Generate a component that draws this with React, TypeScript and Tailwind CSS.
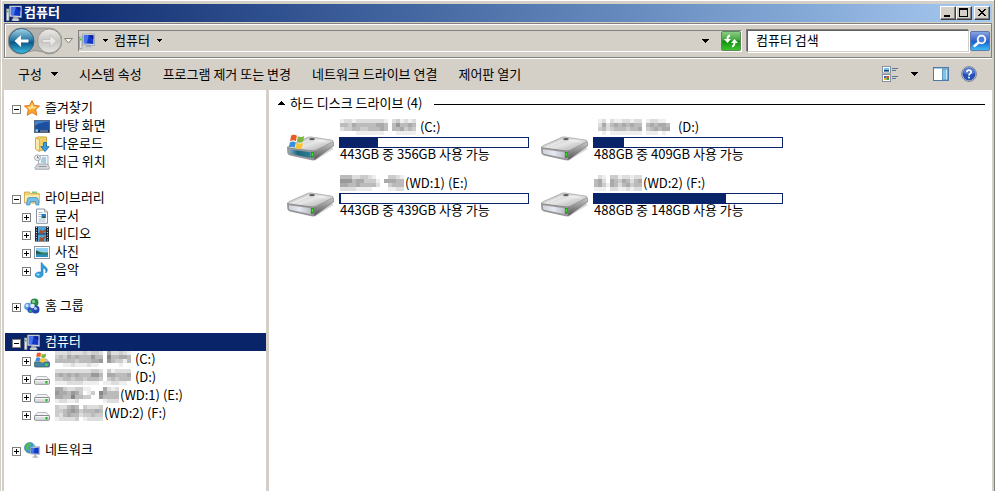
import React, { useState } from 'react';

type IconProps = { className?: string };

/* ---------- small icons (16x16 grid) ---------- */

function ComputerIcon({ className = 'size-4' }: IconProps) {
  return (
    <svg viewBox="0 0 16 16" className={className} aria-hidden="true">
      <rect x="0.5" y="4" width="2.5" height="11.5" fill="#e4e6ea" stroke="#8b9098" strokeWidth="0.7" />
      <rect x="1" y="5.5" width="1.5" height="2" fill="#3fc22f" />
      <path d="M7.5 12h4l1.5 3H6z" fill="#aab0ba" />
      <ellipse cx="9.5" cy="15" rx="4" ry="1" fill="#c9cdd4" />
      <path d="M3.5 1h12v11.5l-12-1z" fill="#dfe3ea" stroke="#8d95a5" strokeWidth="0.7" />
      <path d="M4.8 2.2h9.6v8.9l-9.6-.8z" fill="#1237c8" />
      <path d="M4.8 2.2h5l-2 8.3-3-.2z" fill="#4a74e8" />
      <path d="M9 2.2h5.4v4z" fill="#0a1f96" />
    </svg>
  );
}

function StarIcon() {
  return (
    <svg viewBox="0 0 16 16" className="size-4" aria-hidden="true">
      <path d="M8 .5l2.3 4.9 5.3.6-3.9 3.6 1.2 5.7L8 12.5l-4.900 2.800 1.200-5.700L.4 6l5.300-.6z" fill="#f9a42c" stroke="#d9731a" strokeWidth="0.9" strokeLinejoin="round" />
      <path d="M8 3l1.4 3.5 3.4.4-2.6 2.2L8 8.6 5.6 9.8 3.2 7l3.3-.4z" fill="#ffe08a" />
    </svg>
  );
}

function DesktopIcon() {
  return (
    <svg viewBox="0 0 16 16" className="size-4" aria-hidden="true">
      <rect x="0.5" y="2.5" width="15" height="12" fill="#1c4f9d" stroke="#5a6880" />
      <path d="M1 11C5 6 10 4 15 3.5V3H1z" fill="#3b7fd0" />
      <path d="M1 8c4-3 8-4 14-4v2C9 6 5 8 1 11z" fill="#1f4f9a" />
      <rect x="1" y="12" width="14" height="2" fill="#16264b" />
      <circle cx="2.8" cy="12.6" r="1.6" fill="#63c7e8" />
      <rect x="6" y="12.5" width="8" height="1" fill="#9fb9de" />
    </svg>
  );
}

function DownloadIcon() {
  return (
    <svg viewBox="0 0 16 16" className="size-4" aria-hidden="true">
      <path d="M1.5 2l3-1.2L12.5 1v12.5l-8 1.5-3-2z" fill="#f0cf68" stroke="#c79b34" strokeWidth="0.8" />
      <path d="M1.5 2l4 1.5v12L1.5 13z" fill="#fae9a8" stroke="#c79b34" strokeWidth="0.6" />
      <path d="M9.5 6.5h3v4.2h2.7L11 15.6l-4.2-4.9h2.7z" fill="#35a0e4" stroke="#1666a8" strokeWidth="0.8" />
    </svg>
  );
}

function RecentIcon() {
  return (
    <svg viewBox="0 0 16 16" className="size-4" aria-hidden="true">
      <path d="M5.5 1.5h8.5v10H4z" fill="#f4f7fa" stroke="#9aa1ab" strokeWidth="0.8" />
      <path d="M8 4h4M7 6h5M7 8h5" stroke="#5ba3d4" />
      <path d="M11 5v5" stroke="#9cc7e4" />
      <path d="M3.5 10h10l2 3.5-.5 1.8H1.5L1 13.5z" fill="#d4d7db" stroke="#8a8f96" strokeWidth="0.7" />
      <path d="M4.5 12.5h8" stroke="#9298a0" />
      <circle cx="3.5" cy="3.7" r="2.9" fill="#edf0f3" stroke="#8f959d" strokeWidth="0.8" />
      <path d="M3.5 2v1.9h1.6" fill="none" stroke="#59616c" strokeWidth="0.8" />
    </svg>
  );
}

function LibraryIcon() {
  return (
    <svg viewBox="0 0 16 16" className="size-4" aria-hidden="true">
      <path d="M.5 2h5l1 1.5h8.8V13H.5z" fill="#f1d272" stroke="#cba241" strokeWidth="0.8" />
      <path d="M1 5.2h14V12H1z" fill="#fbeeb2" />
      <path d="M8 2.2h5" stroke="#5bb968" strokeWidth="1.2" />
      <path d="M2.5 15l.8-5.5Q3.5 7.5 5.5 7.5H12q2 0 2.200 2l.8 5.500h-3l-.6-3.500H6.600L5.800 15z" fill="#72bfea" stroke="#3887bd" strokeWidth="0.7" />
    </svg>
  );
}

function DocumentIcon() {
  return (
    <svg viewBox="0 0 16 16" className="size-4" aria-hidden="true">
      <path d="M2.5 1h8l3 3v11.300h-11z" fill="#fff" stroke="#7f8894" strokeWidth="0.9" />
      <path d="M10.5 1v3h3" fill="#dde3ea" stroke="#7f8894" strokeWidth="0.7" />
      <path d="M4.5 4.5h4M4.5 6.500h3M4.500 8.500h3M4.500 11h7M4.500 13h7" stroke="#9db2cd" strokeWidth="0.9" />
      <rect x="7.5" y="6" width="4.5" height="4" fill="#2c7cc4" />
      <path d="M7.5 10l2-2 2.500 2z" fill="#2b5d33" />
    </svg>
  );
}

function VideoIcon() {
  return (
    <svg viewBox="0 0 16 16" className="size-4" aria-hidden="true">
      <rect x="1" y="0.5" width="14" height="15" fill="#1d2733" />
      <rect x="4" y="1" width="8" height="6.5" fill="#4ba3e2" />
      <rect x="4" y="8.5" width="8" height="6.5" fill="#4ba3e2" />
      <path d="M5 7.500l1-4 2.500 1.500L12 3v2L9 7.500zM5 15l1-4 2 1 3-2 1 1-2 2v2z" fill="#a8502c" />
      <path d="M2.500 1v14M13.500 1v14" stroke="#cfd6dc" strokeWidth="1.1" strokeDasharray="1.1 1.4" />
    </svg>
  );
}

function PictureIcon() {
  return (
    <svg viewBox="0 0 16 16" className="size-4" aria-hidden="true">
      <rect x="0.5" y="2.5" width="15" height="12" fill="#fff" stroke="#8b949e" />
      <rect x="2" y="4" width="12" height="9" fill="#8fd0f2" />
      <path d="M2 7c3 0 5 2 12 1.500V11H2z" fill="#2f7d68" />
      <path d="M2 10.500h12V13H2z" fill="#2a8fbf" />
      <path d="M2 6.500c2 0 3 2 5 3H2z" fill="#1d5247" />
    </svg>
  );
}

function MusicIcon() {
  return (
    <svg viewBox="0 0 16 16" className="size-4" aria-hidden="true">
      <path d="M8 .8c.5 3 5.500 4 5.300 7.200-.1 1.300-.8 2.300-1.600 3 .8-3-.7-4.500-2.700-5v6.500c0 1.800-1.900 3-4.200 3-2 0-3.600-.9-3.600-2.500 0-1.800 2-3 4.100-3 .9 0 1.600.2 1.900.4V.8z" fill="#2ea1e3" stroke="#1669aa" strokeWidth="0.6" />
      <ellipse cx="4" cy="12.5" rx="1.6" ry="1" fill="#a9dcf8" />
    </svg>
  );
}

function HomegroupIcon() {
  return (
    <svg viewBox="0 0 16 16" className="size-4" aria-hidden="true">
      <circle cx="10.5" cy="4.5" r="4" fill="#2b8a4c" />
      <circle cx="4" cy="8.5" r="3.8" fill="#5c9be0" />
      <circle cx="11.5" cy="11.5" r="4" fill="#2446b4" />
      <circle cx="6.5" cy="12" r="3" fill="#2d52bd" />
      <circle cx="9.5" cy="3.5" r="1.5" fill="#92d69b" />
      <circle cx="3" cy="7.5" r="1.5" fill="#cfe6fa" />
      <circle cx="8.5" cy="8" r="2.3" fill="#dfeaf8" />
      <circle cx="11.5" cy="10.5" r="1.6" fill="#a9c6f2" />
      <circle cx="6.5" cy="13" r="1.3" fill="#3aa65b" />
    </svg>
  );
}

function NetworkIcon() {
  return (
    <svg viewBox="0 0 16 16" className="size-4" aria-hidden="true">
      <circle cx="5.8" cy="5.8" r="5.3" fill="#3d9bdc" stroke="#2367a5" strokeWidth="0.6" />
      <path d="M2 3c2-2.500 4-2.200 5-1.500L6 4 4 5l1 2-2 2C1.500 7.500 1 5 2 3z" fill="#55bd4c" />
      <path d="M9 1.800c1.500 1 2 2.500 2 3.700L9 5z" fill="#7cd06c" />
      <path d="M6.500 5.500l9-1v8l-9-.5z" fill="#dfe4ed" stroke="#8a94a8" strokeWidth="0.6" />
      <path d="M7.200 6.200l7.600-.8v6.300l-7.600-.5z" fill="#1238c4" />
      <path d="M7.200 6.200l3.500-.3-1.200 5.300-2.300-.1z" fill="#4a76e8" />
      <path d="M10.300 12.400h2v2h1.700v1.300H8.600v-1.300h1.700z" fill="#a7aeba" />
    </svg>
  );
}

function DriveIcon() {
  return (
    <svg viewBox="0 0 16 16" className="size-4" aria-hidden="true">
      <path d="M3.500 6.500h9l3 3.500H.5z" fill="#f2f3f4" stroke="#9b9fa4" strokeWidth="0.7" />
      <rect x="0.5" y="9.5" width="15" height="4.8" rx="1" fill="#dcdee1" stroke="#76797e" strokeWidth="0.8" />
      <path d="M1.500 10.500h13" stroke="#fff" strokeWidth="0.8" />
      <rect x="11.5" y="11" width="2" height="2.5" fill="#22b322" />
    </svg>
  );
}

function WindowsFlag() {
  return (
    <g>
      <path d="M2 1.500C4 .3 6 .5 7.500 1.600L6.600 6.800C5 5.700 3 5.600 1 6.800z" fill="#ea5a24" />
      <path d="M8.500 2.200c2 1 4 .9 6-.2l-1 5.200c-2 1.100-4 1.100-6 0z" fill="#79b83b" />
      <path d="M.8 8C2.800 6.800 4.800 6.900 6.300 8l-.9 5c-1.500-1-3.500-1.100-5.500 0z" fill="#3a8fdc" />
      <path d="M7.300 8.500c2 1 4 1 6 0l-1 5c-2 1.100-4 1.100-6 0z" fill="#fbc62d" />
    </g>
  );
}

function SystemDriveIcon() {
  return (
    <svg viewBox="0 0 16 16" className="size-4" aria-hidden="true">
      <path d="M3.500 7h9l3 3.500H.5z" fill="#c3ccd2" stroke="#8b949a" strokeWidth="0.6" />
      <rect x="0.5" y="10" width="15" height="5" rx="1" fill="#3d88a4" stroke="#4b5c66" strokeWidth="0.8" />
      <rect x="11.5" y="11.5" width="2" height="2.5" fill="#4be04b" />
      <g transform="translate(1.500 0) scale(.74)">
        <WindowsFlag />
      </g>
    </svg>
  );
}

/* ---------- large drive icon ---------- */

function LargeDriveIcon({ system }: { system?: boolean }) {
  const front = system ? 'url(#front-system)' : 'url(#front-plain)';
  return (
    <svg viewBox="0 0 48 32" className="h-8 w-12 shrink-0" aria-hidden="true">
      <defs>
        <linearGradient id="drive-top" x1="0" y1="0" x2="1" y2="1">
          <stop offset="0" stopColor="#b5b5b5" />
          <stop offset="0.5" stopColor="#e6e6e6" />
          <stop offset="1" stopColor="#a0a0a0" />
        </linearGradient>
        <linearGradient id="drive-side" x1="0" y1="0" x2="0" y2="1">
          <stop offset="0" stopColor="#cacaca" />
          <stop offset="1" stopColor="#555555" />
        </linearGradient>
        <linearGradient id="front-plain" x1="0" y1="0" x2="1" y2="0">
          <stop offset="0" stopColor="#d0d1d8" />
          <stop offset="0.5" stopColor="#e6e8f2" />
          <stop offset="1" stopColor="#bcbdc6" />
        </linearGradient>
        <linearGradient id="front-system" x1="0" y1="0" x2="1" y2="0">
          <stop offset="0" stopColor="#7fb2c4" />
          <stop offset="0.4" stopColor="#20647f" />
          <stop offset="1" stopColor="#2d7f96" />
        </linearGradient>
      </defs>
      <path d="M2 22l25 6 20-12-4-3z" fill="#000" opacity="0.14" />
      <path d="M27 17L46 8.500Q47 9 46.500 13L29 26q-1.500 1-3 .5z" fill="url(#drive-side)" stroke="#808080" strokeWidth="0.6" />
      <path d="M.5 14Q1 13 3 12.200L21 4.300q1.500-.5 3-.3l20.500 3q2 .5 1.500 1.800L29 17.300q-2 1-4 .7L2 15q-1.500-.2-1.500-1z" fill="url(#drive-top)" stroke="#8f8f8f" strokeWidth="0.6" />
      <path d="M.5 14.200Q1 15 3 15.200L25 18q1.500.2 2.500-.2L27 26.500q-1 .5-3 .1L3 22q-2-.5-2.200-2z" fill="#9d9da1" stroke="#77777b" strokeWidth="0.6" />
      <path d="M2 16.300L23.500 19.200v5.800L3 20.700q-1-.3-1-1.200z" fill={front} />
      <path d="M6 14L23 6.500l17 2.500" fill="none" stroke="#fff" strokeWidth="0.8" opacity="0.7" />
      <ellipse cx="25" cy="6.2" rx="2.8" ry="1.1" fill="#5e5e5e" />
      <rect x="24" y="19" width="2.5" height="5.5" fill="#0a6f1a" />
      <rect x="24.5" y="19.5" width="1.5" height="4" fill="#3fe02f" />
      {system && (
        <g transform="translate(2 1) scale(1.050)">
          <WindowsFlag />
        </g>
      )}
    </svg>
  );
}

/* ---------- chrome icons ---------- */

function Caret({ up }: { up?: boolean }) {
  return (
    <svg viewBox="0 0 8 4" className="h-1 w-2 shrink-0" shapeRendering="crispEdges" aria-hidden="true">
      <path d={up ? 'M0 4L4 0l4 4z' : 'M0 0h8L4 4z'} fill="#000" />
    </svg>
  );
}

function SmallCaret() {
  return (
    <svg viewBox="0 0 5 3" className="h-[3px] w-[5px] shrink-0" shapeRendering="crispEdges" aria-hidden="true">
      <path d="M0 0h5L2.500 3z" fill="#000" />
    </svg>
  );
}

function NavButtons() {
  return (
    <div className="relative flex h-7 w-[54px] shrink-0">
      <svg viewBox="0 0 54 28" className="absolute inset-0" aria-hidden="true">
        <defs>
          <linearGradient id="nav-back" x1="0" y1="0" x2="0" y2="1">
            <stop offset="0" stopColor="#a5d3e6" />
            <stop offset="0.45" stopColor="#2b7ba8" />
            <stop offset="0.55" stopColor="#0d5685" />
            <stop offset="1" stopColor="#3cc0e6" />
          </linearGradient>
          <linearGradient id="nav-forward" x1="0" y1="0" x2="0" y2="1">
            <stop offset="0" stopColor="#eceae6" />
            <stop offset="0.5" stopColor="#c9c7c3" />
            <stop offset="1" stopColor="#e6e4e0" />
          </linearGradient>
        </defs>
        <path d="M13 1h28a13 13 0 0 1 0 26q-3 0-6-2-8-3-16 0-3 2-6 2a13 13 0 0 1 0-26z" fill="#b2b0ac" stroke="#8e8c88" strokeWidth="0.8" />
        <circle cx="13.5" cy="14" r="12.5" fill="url(#nav-back)" stroke="#3d5f75" />
        <path d="M6.500 14l6.500-6v4.500h7.500v3H13V20z" fill="#fff" />
        <circle cx="41.5" cy="14" r="12" fill="url(#nav-forward)" stroke="#9a9894" />
        <path d="M48.500 14L42 8v4.500h-7.500v3H42V20z" fill="#eae8e4" stroke="#bdbbb7" strokeWidth="0.8" />
      </svg>
      <button className="relative h-full flex-1 rounded-full" aria-label="뒤로" />
      <button className="relative h-full flex-1 rounded-full" aria-label="앞으로" disabled />
    </div>
  );
}

function RefreshIcon() {
  return (
    <svg viewBox="0 0 20 20" className="size-5" aria-hidden="true">
      <defs>
        <linearGradient id="refresh-bg" x1="0" y1="0" x2="0" y2="1">
          <stop offset="0" stopColor="#8ed088" />
          <stop offset="0.45" stopColor="#42a63c" />
          <stop offset="0.5" stopColor="#138d14" />
          <stop offset="1" stopColor="#3fc72d" />
        </linearGradient>
      </defs>
      <rect x="0.5" y="0.5" width="19" height="19" rx="1.5" fill="url(#refresh-bg)" stroke="#5d8a5b" />
      <path d="M9 4.500Q6.500 5 6.500 8.500" fill="none" stroke="#fff" strokeWidth="1.8" />
      <path d="M3 8h7l-3.500 4z" fill="#fff" />
      <path d="M11 15.500q2.500-.5 2.500-4" fill="none" stroke="#fff" strokeWidth="1.8" />
      <path d="M10 12h7l-3.500-4z" fill="#fff" />
    </svg>
  );
}

function SearchIcon() {
  return (
    <svg viewBox="0 0 20 20" className="size-5" aria-hidden="true">
      <defs>
        <linearGradient id="search-bg" x1="0" y1="0" x2="0" y2="1">
          <stop offset="0" stopColor="#8ba8e2" />
          <stop offset="0.45" stopColor="#3b66cb" />
          <stop offset="0.55" stopColor="#1a63cf" />
          <stop offset="1" stopColor="#3dc3f5" />
        </linearGradient>
      </defs>
      <rect x="0.5" y="0.5" width="19" height="19" rx="1.5" fill="url(#search-bg)" stroke="#5e78ab" />
      <path d="M8.500 11.500L4.500 15" stroke="#fff" strokeWidth="2.4" strokeLinecap="round" />
      <circle cx="11.5" cy="8.5" r="3.8" fill="#4b7cd8" stroke="#fff" strokeWidth="1.8" />
    </svg>
  );
}

function ViewsIcon() {
  return (
    <svg viewBox="0 0 16 16" className="size-4" aria-hidden="true">
      <rect x="0.5" y="0.5" width="8" height="6.5" fill="#fff" stroke="#8a9099" />
      <rect x="2" y="2" width="5" height="3.5" fill="#6cc4e4" />
      <rect x="2" y="4" width="5" height="1.5" fill="#21406b" />
      <rect x="0.5" y="8.5" width="8" height="7" fill="#fff" stroke="#8a9099" />
      <rect x="2" y="10" width="2.5" height="2" fill="#3765c4" />
      <rect x="4.5" y="10" width="2.5" height="2" fill="#d04a28" />
      <rect x="2" y="12" width="2.5" height="2" fill="#eaaa2d" />
      <rect x="4.5" y="12" width="2.5" height="2" fill="#37a03a" />
      <path d="M10 2.500h6M10 4.500h4M10 10.500h6M10 12.500h4" stroke="#58779f" />
    </svg>
  );
}

function PreviewPaneIcon() {
  return (
    <svg viewBox="0 0 16 16" className="size-4" aria-hidden="true">
      <rect x="0.5" y="1.5" width="15" height="13" fill="#fff" stroke="#4c7ba6" />
      <path d="M1 2.500h14" stroke="#a8c6e0" />
      <rect x="9.5" y="3" width="5.5" height="11" fill="#7fc3ea" stroke="#4c86b5" strokeWidth="0.8" />
      <path d="M13.500 3.500v10" stroke="#c5e8fa" />
    </svg>
  );
}

function HelpIcon() {
  return (
    <svg viewBox="0 0 16 16" className="size-4" aria-hidden="true">
      <circle cx="8" cy="8" r="7.4" fill="#d5d9e4" stroke="#6b7590" strokeWidth="0.9" />
      <circle cx="8" cy="8" r="6.5" fill="#2450b4" />
      <path d="M1.800 7a6.300 6.300 0 0 1 12.400 0Q8 9.500 1.800 7z" fill="#5078ce" />
      <path d="M5.800 6.300q0-2.200 2.200-2.200t2.200 1.900q0 1.100-1.200 1.800T8 9.600" fill="none" stroke="#fff" strokeWidth="1.6" />
      <rect x="7.2" y="10.7" width="1.7" height="1.7" fill="#fff" />
    </svg>
  );
}

/* ---------- masked volume names ---------- */

// one hex digit per 4px cell, 0 = black, f = white
function Mosaic({ rows }: { rows: string[] }) {
  const width = rows[0].length * 4;
  const height = rows.length * 4;
  return (
    <svg width={width} height={height} viewBox={`0 0 ${width} ${height}`} className="shrink-0" shapeRendering="crispEdges" aria-hidden="true">
      {rows.map((row, y) =>
        row.split('').map((shade, x) => (
          <rect key={`${x}-${y}`} x={x * 4} y={y * 4} width="4" height="4" fill={`#${shade}${shade}${shade}`} />
        )),
      )}
    </svg>
  );
}

/* ---------- data ---------- */

type TreeNode = {
  label: string;
  icon: React.ReactNode;
  mask?: string[];
  expander?: boolean;
};

type TreeGroup = TreeNode & { open?: boolean; selected?: boolean; children?: TreeNode[] };

const tree: TreeGroup[] = [
  {
    label: '즐겨찾기',
    icon: <StarIcon />,
    open: true,
    children: [
      { label: '바탕 화면', icon: <DesktopIcon /> },
      { label: '다운로드', icon: <DownloadIcon /> },
      { label: '최근 위치', icon: <RecentIcon /> },
    ],
  },
  {
    label: '라이브러리',
    icon: <LibraryIcon />,
    open: true,
    children: [
      { label: '문서', icon: <DocumentIcon />, expander: true },
      { label: '비디오', icon: <VideoIcon />, expander: true },
      { label: '사진', icon: <PictureIcon />, expander: true },
      { label: '음악', icon: <MusicIcon />, expander: true },
    ],
  },
  { label: '홈 그룹', icon: <HomegroupIcon /> },
  {
    label: '컴퓨터',
    icon: <ComputerIcon />,
    open: true,
    selected: true,
    children: [
      {
        label: ' (C:)',
        icon: <SystemDriveIcon />,
        expander: true,
        mask: ['dddcdddcdccdfaddcde', 'cbcababbb9bbf8bbaab', 'bbbbbcbbbaa9f9bcceb', 'ffeedeeedeefffffeff'],
      },
      {
        label: ' (D:)',
        icon: <DriveIcon />,
        expander: true,
        mask: ['dddddddddccdfcedddd', 'babababbb99bfaabbba', 'ccbbcbbcbbbcfcbcbbb', 'eeeddddeeeefeeddeef'],
      },
      {
        label: '(WD:1) (E:)',
        icon: <DriveIcon />,
        expander: true,
        mask: ['aacddcceefffaded', '9aab9acfecf8abbb', 'aabb8bbccff9bbbb', 'eddeedffffffeddd'],
      },
      {
        label: '(WD:2) (F:)',
        icon: <DriveIcon />,
        expander: true,
        mask: ['cddbabfcdddc', 'ccba9acbbbab', 'cdbabbdccbcc', 'eddddcfedddd'],
      },
    ],
  },
  { label: '네트워크', icon: <NetworkIcon /> },
];

type Drive = { label: string; mask: string[]; total: number; free: number; filled: number; system?: boolean };

const drives: Drive[] = [
  {
    label: ' (C:)',
    mask: ['eddedddddddefdceded', 'bbcabbbbbaabfb9bbab', 'dccbbccbbbabfbbacbc', 'ffffeeeeeeefffeeeee'],
    total: 443,
    free: 356,
    filled: 20,
    system: true,
  },
  {
    label: ' (D:)',
    mask: ['fedfdeeddeddfeddeeff', 'fdadbabababbfbabaabf', 'fcbdcbbbcbbafcbabaaf', 'ffefeeeeeeeefeeefeff'],
    total: 488,
    free: 409,
    filled: 16,
  },
  {
    label: '(WD:1) (E:)',
    mask: ['bbbddccdefffccde', '999baacccefaaabb', 'aabbabbbbdffcbbb', 'ddddeeeeffffeedd'],
    total: 443,
    free: 439,
    filled: 0.6,
  },
  {
    label: '(WD:2) (F:)',
    mask: ['fdefcceddedd', 'badfabcabdba', 'baceabdbacbb', 'eeefddeededd'],
    total: 488,
    free: 148,
    filled: 70,
  },
];

/* ---------- parts ---------- */

function Expander({ open, label, onClick }: { open: boolean; label: string; onClick?: () => void }) {
  return (
    <button className="mt-0.5 size-[9px] shrink-0" aria-label={label} aria-expanded={open} onClick={onClick}>
      <svg viewBox="0 0 9 9" className="block size-[9px]" shapeRendering="crispEdges" aria-hidden="true">
        <rect width="9" height="9" fill="#808080" />
        <rect x="1" y="1" width="7" height="7" fill="#fff" />
        <rect x="2" y="4" width="5" height="1" fill="#000" />
        {!open && <rect x="4" y="2" width="1" height="5" fill="#000" />}
      </svg>
    </button>
  );
}

function TreeGroupView({ group }: { group: TreeGroup }) {
  const [open, setOpen] = useState(!!group.open);

  return (
    <li>
      <div className={`ml-px flex h-[18px] items-center pl-[7px] ${group.selected ? 'bg-[#0a246a] text-white' : ''}`}>
        <Expander open={open} label={group.label} onClick={() => setOpen(!open)} />
        <a href="#" className="ml-[3px] flex items-center gap-[5px]">
          {group.icon}
          <span className="pb-0.5 leading-4">{group.label}</span>
        </a>
      </div>
      {open && group.children && (
        <ul>
          {group.children.map((node) => (
            <li key={node.label} className="flex h-[18px] items-center pl-[18px]">
              {node.expander ? <Expander open={false} label={node.label} /> : <span className="w-[9px]" />}
              <a href="#" className="ml-[3px] flex items-center gap-[5px]">
                {node.icon}
                <span className="flex items-center gap-px pb-0.5 leading-4 whitespace-pre">
                  {node.mask && <Mosaic rows={node.mask} />}
                  {node.label}
                </span>
              </a>
            </li>
          ))}
        </ul>
      )}
    </li>
  );
}

function DriveTile({ drive }: { drive: Drive }) {
  return (
    <li className="flex gap-1">
      <div className="pt-3.5">
        <LargeDriveIcon system={drive.system} />
      </div>
      <div className="min-w-0 flex-1">
        <div className="flex h-[18px] items-center gap-px pb-0.5 pl-px whitespace-pre">
          <Mosaic rows={drive.mask} />
          {drive.label}
        </div>
        <div
          className="h-[11px] w-[190px] border border-[#0a246a] bg-white"
          role="progressbar"
          aria-label={drive.label}
          aria-valuenow={drive.filled}
        >
          <div className="h-full bg-[#0a246a]" style={{ width: `${drive.filled}%` }} />
        </div>
        <div className="pl-px leading-3 whitespace-nowrap">
          {drive.total}GB 중 {drive.free}GB 사용 가능
        </div>
      </div>
    </li>
  );
}

function CaptionButton({ label, children }: { label: string; children: React.ReactNode }) {
  return (
    <button
      aria-label={label}
      className="h-3.5 w-4 border border-t-white border-r-[#404040] border-b-[#404040] border-l-white bg-[#d4d0c8] shadow-[inset_-1px_-1px_0_#808080]"
    >
      <svg viewBox="0 0 14 12" className="block h-3 w-3.5" shapeRendering="crispEdges" aria-hidden="true">
        {children}
      </svg>
    </button>
  );
}

function TitleBar() {
  return (
    <header className="flex h-[18px] items-center bg-linear-to-r from-[#0a246a] to-[#a6caf0] pr-0.5 pl-0.5">
      <ComputerIcon />
      <h1 className="ml-0.5 flex-1 pb-0.5 leading-4 font-bold text-white">컴퓨터</h1>
      <CaptionButton label="최소화">
        <rect x="3" y="8" width="6" height="2" fill="#000" />
      </CaptionButton>
      <CaptionButton label="최대화">
        <path d="M2 1h9v9H2zM3 3v6h7V3z" fill="#000" fillRule="evenodd" />
      </CaptionButton>
      <div className="ml-0.5 flex">
        <CaptionButton label="닫기">
          <path d="M3 2h2v1h1v1h2V3h1V2h2v1h-1v1H9v1H8v1h1v1h1v1h1v1H9V8H8V7H6v1H5v1H3V8h1V7h1V6h1V5H5V4H4V3H3z" fill="#000" />
        </CaptionButton>
      </div>
    </header>
  );
}

function NavigationBar() {
  return (
    <nav className="mt-px flex h-[35px] items-center border border-[#808080] pr-px pl-[3px] shadow-[inset_1px_1px_0_#fff,0_1px_0_#fff]">
      <NavButtons />
      <button className="flex h-5 w-3 items-center justify-center" aria-label="최근 페이지">
        <svg viewBox="0 0 9 6" className="h-1.5 w-[9px]" aria-hidden="true">
          <path d="M.5.5h8l-4 4.500z" fill="#f2f0ec" stroke="#7d7b77" strokeWidth="0.9" />
        </svg>
      </button>
      <div className="ml-1 flex h-[22px] min-w-0 flex-1 items-center border border-t-[#808080] border-r-white border-b-white border-l-[#808080]">
        <ComputerIcon />
        <button className="ml-2 flex h-full items-center" aria-label="위치">
          <SmallCaret />
        </button>
        <button className="ml-1.5 flex items-center gap-[7px]">
          <span className="pb-0.5">컴퓨터</span>
          <SmallCaret />
        </button>
        <button className="mr-3 ml-auto flex h-full items-center" aria-label="이전 위치">
          <Caret />
        </button>
        <button aria-label="새로 고침">
          <RefreshIcon />
        </button>
      </div>
      <input
        type="text"
        aria-label="컴퓨터 검색"
        placeholder="컴퓨터 검색"
        className="ml-[5px] h-[22px] w-[222px] border border-t-[#606060] border-r-[#d4d0c8] border-b-[#d4d0c8] border-l-[#606060] bg-white pb-0.5 pl-2 shadow-[-1px_-1px_0_#808080,1px_1px_0_#fff] outline-none placeholder:text-black placeholder:opacity-100"
      />
      <button className="ml-px" aria-label="검색">
        <SearchIcon />
      </button>
    </nav>
  );
}

function CommandBar() {
  return (
    <div className="mt-px flex h-[31px] items-center gap-[21px] pr-[15px] pb-0.5 pl-3.5 whitespace-nowrap">
      <button className="flex items-center gap-2">
        구성
        <Caret />
      </button>
      <button>시스템 속성</button>
      <button>프로그램 제거 또는 변경</button>
      <button>네트워크 드라이브 연결</button>
      <button>제어판 열기</button>
      <div className="ml-auto flex items-center">
        <button aria-label="보기 변경">
          <ViewsIcon />
        </button>
        <button className="ml-3 flex h-4 items-center" aria-label="추가 옵션">
          <Caret />
        </button>
        <button className="ml-[15px]" aria-label="미리 보기 창">
          <PreviewPaneIcon />
        </button>
        <button className="ml-3" aria-label="도움말">
          <HelpIcon />
        </button>
      </div>
    </div>
  );
}

export default function App() {
  return (
    <div className="flex min-h-screen border-r border-[#808080] bg-[#d4d0c8] pl-px font-['Noto_Sans_CJK_KR',sans-serif] text-[13px] leading-[18px] text-black">
      <div className="flex min-w-0 flex-1 flex-col border-t border-l border-white pt-[3px] pr-0.5 pl-0.5">
        <TitleBar />
        <NavigationBar />
        <CommandBar />
        <div className="flex flex-1">
          <aside className="w-[262px] shrink-0 bg-white pt-[9px]">
            <ul className="flex flex-col gap-[18px]">
              {tree.map((group) => (
                <TreeGroupView key={group.label} group={group} />
              ))}
            </ul>
          </aside>
          <main className="ml-[3px] min-w-0 flex-1 bg-white pt-1">
            <div className="flex h-[18px] items-center pr-[7px] pl-2">
              <button className="flex items-center gap-[5px]">
                <Caret up />
                하드 디스크 드라이브 (4)
              </button>
              <div className="mt-0.5 ml-3 h-px flex-1 bg-black" />
            </div>
            <ul className="mt-[7px] grid grid-cols-[repeat(auto-fill,254px)] gap-y-2.5 pl-[18px]">
              {drives.map((drive) => (
                <DriveTile key={drive.label} drive={drive} />
              ))}
            </ul>
          </main>
        </div>
      </div>
    </div>
  );
}
